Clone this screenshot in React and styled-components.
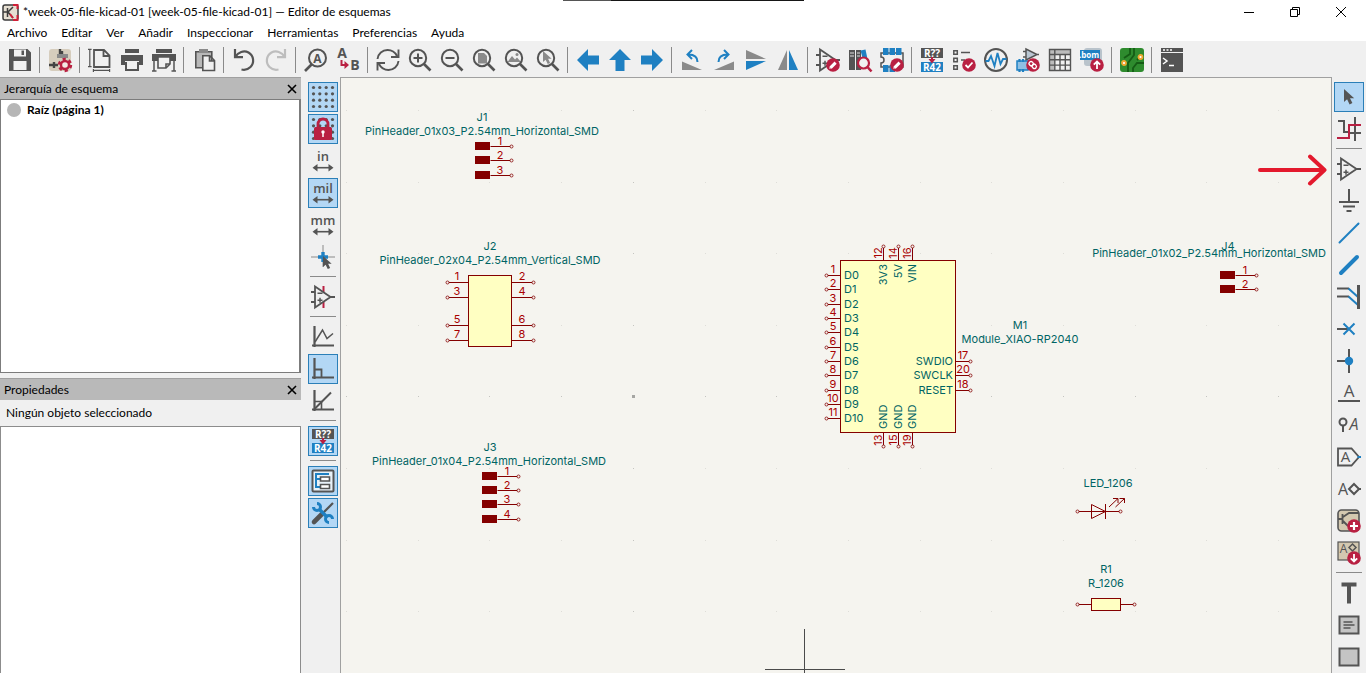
import React from 'react';
import styled, { createGlobalStyle } from 'styled-components';

const INK = '#545454';
const RED = '#b92042';
const BLUE = '#1f80c2';
const GREY = '#8a8a8a';
const UI_FONT = 'Lato, "Open Sans", sans-serif';

const GlobalStyle = createGlobalStyle`
  * { box-sizing: border-box; }
  body { margin: 0; background: #f0f0f0; font: 12px/16px ${UI_FONT}; color: #000; overflow: hidden; }
  button { font: inherit; color: inherit; border: 0; padding: 0; background: none; }
  svg { display: block; overflow: visible; }
`;

const Window = styled.div`
  display: flex;
  flex-direction: column;
  min-height: 100vh;
`;
const TitleBar = styled.header`
  display: flex;
  align-items: center;
  gap: 4px;
  height: 24px;
  padding: 0 2px;
  background: #fff;
`;
const Title = styled.h1`
  flex: 1;
  margin: 0;
  font-size: 12px;
  font-weight: 400;
`;
const WindowButtons = styled.div`
  display: flex;
`;
const WindowButton = styled.button`
  display: grid;
  place-items: center;
  width: 46px;
  height: 20px;
`;
const BackgroundEdge = styled.div`
  position: absolute;
  top: 0;
  left: 563px;
  width: 241px;
  height: 1px;
  background: linear-gradient(90deg, #555 20%, #161616 20%);
`;
const MenuBar = styled.nav`
  display: flex;
  gap: 14px;
  height: 17px;
  padding: 0 7px;
  background: #fff;
`;
const MenuButton = styled.button`
  line-height: 17px;
`;
const TopToolbar = styled.div`
  display: flex;
  align-items: center;
  height: 36px;
  padding: 2px 4px 0;
  background: #f0f0f0;
`;
const SideToolbar = styled.div`
  display: flex;
  flex-direction: column;
  align-items: center;
  flex: 0 0 ${(p) => p.$width}px;
  padding: 4px 0 0 ${(p) => p.$inset || 0}px;
  background: #f0f0f0;
`;
const ToolButton = styled.button`
  display: grid;
  place-items: center;
  flex: none;
  width: 30px;
  height: 30px;
  margin: 1px;
  border: 1px solid ${(p) => (p.$active ? '#2b7fb8' : 'transparent')};
  background: ${(p) => (p.$active ? '#b3d7f5' : 'transparent')};
`;
const Separator = styled.div`
  flex: none;
  background: ${GREY};
  ${(p) => (p.$side ? 'width: 26px; height: 1px; margin: 3px 0 4px;' : 'width: 1px; height: 26px; margin: 0 4px 0 3px;')}
`;
const Body = styled.main`
  display: flex;
  flex: 1;
`;
const Docks = styled.aside`
  display: flex;
  flex-direction: column;
  flex: 0 0 301px;
  gap: 5px;
`;
const Dock = styled.section`
  display: flex;
  flex-direction: column;
  flex: ${(p) => (p.$grow ? '1' : '0 0 296px')};
  border-top: 1px solid #a0a0a0;
`;
const DockHeader = styled.div`
  display: flex;
  align-items: center;
  justify-content: space-between;
  height: 21px;
  padding: 0 4px;
  background: #b9b9b9;
`;
const DockTitle = styled.h2`
  margin: 0;
  font-size: 12px;
  font-weight: 400;
`;
const DockClose = styled.button`
  display: grid;
  place-items: center;
  width: 10px;
  height: 10px;
`;
const Sheets = styled.ul`
  flex: 1;
  margin: 0;
  padding: 2px 6px;
  list-style: none;
  background: #fff;
  border: 1px solid #7c7c7c;
  border-right-width: 2px;
`;
const Sheet = styled.li`
  display: flex;
  align-items: center;
  gap: 6px;
  font-weight: 700;
  &::before {
    content: '';
    width: 14px;
    height: 14px;
    border-radius: 50%;
    background: #b6b6b6;
  }
`;
const Selection = styled.p`
  margin: 0;
  padding: 5px 6px;
`;
const PropertyGrid = styled.div`
  flex: 1;
  background: #fff;
  border: 1px solid #8c8c8c;
  border-bottom: 0;
`;
const Canvas = styled.div`
  position: relative;
  flex: 1;
  min-width: 0;
  overflow: hidden;
  background: #f5f4ef;
  border: 1px solid #a0a0a0;
  border-bottom: 0;
`;
const Drawing = styled.svg`
  position: absolute;
  inset: 0;
  width: 100%;
  height: 100%;
  font: 11px Inter, sans-serif;
  font-feature-settings: 'calt' 0;
`;

/* ---------- icons ---------- */

const Icon = ({ children }) => (
  <svg width="24" height="24" viewBox="0 0 24 24" fill="none" stroke={INK} strokeWidth="2" aria-hidden="true">
    {children}
  </svg>
);
const Glyph = ({ x, y, size = 10, fill = INK, weight = 700, family = 'Open Sans', italic, children }) => (
  <text x={x} y={y} fontSize={size} fill={fill} stroke="none" fontWeight={weight} fontFamily={`"${family}", sans-serif`} fontStyle={italic ? 'italic' : 'normal'} textAnchor="middle">
    {children}
  </text>
);
const Badge = ({ x = 17, y = 17, children }) => (
  <g>
    <circle cx={x} cy={y} r="6.8" fill={RED} stroke="none" />
    <g stroke="#fff" strokeWidth="1.8">{children}</g>
  </g>
);
const Pencil = () => (
  <Badge>
    <path d="M14.6 19.6l5-5" strokeWidth="3" />
    <path d="M13.2 20.8l.6-2.4 1.8 1.8z" fill="#fff" stroke="none" />
  </Badge>
);
const Lens = ({ children }) => (
  <>
    {children}
    <circle cx="10" cy="10" r="8.2" />
    <path d="M16 16l6.5 6.5" strokeWidth="2.6" />
  </>
);
const OpAmp = () => (
  <g strokeWidth="1.8">
    <path d="M4 1.5v21L19.5 12zM0 7h4M0 17h4M19 12h5" />
    <path d="M6.500 8.300h5M6.500 15.200h5M9 12.700v5" strokeWidth="1.500" />
  </g>
);
const Annotate = () => (
  <>
    <rect x="1" y="0" width="22" height="10" fill={INK} stroke="none" />
    <rect x="1" y="14" width="22" height="10" fill={BLUE} stroke="none" />
    <Glyph x="12" y="9" size="10" fill="#fff">R??</Glyph>
    <Glyph x="12" y="23" size="10" fill="#fff">R42</Glyph>
    <path d="M12 9v3" stroke={RED} />
    <path d="M8.500 11h7L12 15.500z" fill={RED} stroke="none" />
  </>
);
const Dots = () => (
  <g fill={INK} stroke="none">
    {[2.5, 8.8, 15.2, 21.5].flatMap((y) => [2.5, 8.8, 15.2, 21.5].map((x) => <circle key={`${x}-${y}`} cx={x} cy={y} r="1.6" />))}
  </g>
);
const Units = ({ children }) => (
  <>
    <Glyph x="12" y="12" size="13" weight="600">{children}</Glyph>
    <path d="M3 18.700h18" strokeWidth="1.600" />
    <path d="M6.500 15v7.400L1.500 18.700zM17.500 15v7.400l5-3.700z" fill={INK} stroke="none" />
  </>
);
const Pointer = ({ fill = INK, ...rest }) => (
  <path d="M0 0v13l3.100-2.800 2.500 5.200 2.800-1.400L6 9.200h4.200z" fill={fill} stroke="none" {...rest} />
);
const BLOCK_ARROW = 'M1 12L12 1v6.500h11v9H12V23z';
const Axes = () => <path d="M3.500 1v21M1 20.500h22" strokeWidth="2.200" />;

const icons = {
  save: <path d="M1 1h18.500L23 4.500V23H1zM6 1.500v7h12v-7zM5.500 13v9h13v-9zM13.500 2.500h2.500v4.500h-2.500z" fill={INK} fillRule="evenodd" stroke="none" />,
  settings: (
    <>
      <rect x="1" y="1" width="22" height="22" rx="3" fill="#d6cdbd" stroke="none" />
      <path d="M12 1v7M1 17h9M6 14v6M14 3v5" strokeWidth="2.400" stroke="#444" />
      <path d="M9 8h11" stroke={GREY} strokeWidth="4" />
      <circle cx="17" cy="17" r="5.400" stroke={RED} strokeWidth="3.600" strokeDasharray="2.900 2.750" />
      <circle cx="17" cy="17" r="4" stroke={RED} strokeWidth="2.400" fill="#f3e9e4" />
    </>
  ),
  page: (
    <>
      <path d="M6 2h10l5.500 5.500V19H6zM15.500 2v6h6" strokeWidth="1.800" />
      <path d="M1.800 1v18M0 1.400h3.600M0 18.600h3.600M5 22.400h17M5.400 21v3M21.600 21v3" strokeWidth="1.200" />
    </>
  ),
  print: (
    <>
      <path d="M5 1h14v4H5zM1 7h22v10h-4v-4H5v4H1z" fill={INK} stroke="none" />
      <path d="M6 14v8h12v-8" />
    </>
  ),
  plot: (
    <>
      <path d="M4 1h16v4H4zM0 6h24v7H0z" fill={INK} stroke="none" />
      <path d="M2 12v11M22 12v11M0 23h4.500M19.500 23H24" strokeWidth="1.500" />
      <path d="M6 9h12v7l-4 4H6z" fill="#f0f0f0" strokeWidth="1.600" />
      <path d="M14 20v-4h4" strokeWidth="1.600" />
    </>
  ),
  paste: (
    <>
      <path d="M3.800 3.800h16v16h-16z" fill="#b8b8b8" strokeWidth="1.600" />
      <path d="M7 1h9v4H7z" fill={GREY} stroke="none" />
      <path d="M10.800 7.800h7l4.700 4.700v10H10.800zM17.500 8v5h5" fill="#f0f0f0" strokeWidth="1.600" />
    </>
  ),
  undo: <path d="M3 1v8.200h8M3.200 9C6 4 12 2 16.500 4.500c5.500 3.200 6 10.500 2 14.500-2.700 2.700-6 3.200-9 2.500" strokeWidth="2.200" />,
  redo: <path d="M21 1v8.200h-8M20.800 9C18 4 12 2 7.500 4.500c-5.500 3.200-6 10.500-2 14.500 2.700 2.700 6 3.200 9 2.500" strokeWidth="2.200" stroke="#bdbdbd" />,
  find: (
    <>
      <circle cx="13.500" cy="10" r="8.500" />
      <path d="M7.500 16.500L1 23" strokeWidth="2.600" />
      <Glyph x="13.500" y="14.500" size="12">A</Glyph>
    </>
  ),
  replace: (
    <>
      <Glyph x="6" y="10" size="14">A</Glyph>
      <Glyph x="19" y="22" size="14">B</Glyph>
      <path d="M5.500 12v5H10" stroke={RED} />
      <path d="M8.500 13l4.500 4-4.500 4z" fill={RED} stroke="none" />
    </>
  ),
  refresh: <path d="M1.500 11C2 5.500 6.500 2 11.500 2c4 0 7.500 2 9.500 6M22.500 1.500V9H15M22.500 13c-.5 5.500-5 9-10 9-4 0-7.500-2-9.500-6M1.500 22.500V15H9" strokeWidth="1.900" />,
  zoomIn: <Lens><path d="M5.500 10h9M10 5.500v9" /></Lens>,
  zoomOut: <Lens><path d="M5.500 10h9" /></Lens>,
  zoomPage: <Lens><path d="M6 5h6l3 3v7.500H6z" fill={GREY} stroke="none" /></Lens>,
  zoomObjects: <Lens><path d="M3.500 14l4.500-6 3 3.500 2-2 4 4.500z" fill={GREY} stroke="none" /><circle cx="13" cy="6.500" r="1.500" fill={GREY} stroke="none" /></Lens>,
  zoomSelection: <Lens><Pointer fill={GREY} transform="translate(7 3) scale(.85)" /></Lens>,
  left: <path d={BLOCK_ARROW} fill={BLUE} stroke="none" />,
  up: <path d={BLOCK_ARROW} fill={BLUE} stroke="none" transform="rotate(90 12 12)" />,
  right: <path d={BLOCK_ARROW} fill={BLUE} stroke="none" transform="rotate(180 12 12)" />,
  rotateLeft: (
    <>
      <path d="M2 13.500V22h20z" fill={GREY} stroke="none" />
      <path d="M17.500 14c0-5-3-7.500-9-7.500M12 2L7.500 6.500 12 11" stroke={BLUE} />
    </>
  ),
  rotateRight: (
    <>
      <path d="M22 13.500V22H2z" fill={GREY} stroke="none" />
      <path d="M6.500 14c0-5 3-7.500 9-7.500M12 2l4.500 4.500L12 11" stroke={BLUE} />
    </>
  ),
  mirrorV: (
    <>
      <path d="M2 2v9h20z" fill={GREY} stroke="none" />
      <path d="M2 22v-9h20z" fill={BLUE} stroke="none" />
    </>
  ),
  mirrorH: (
    <>
      <path d="M2 22h9V2z" fill={GREY} stroke="none" />
      <path d="M22 22h-9V2z" fill={BLUE} stroke="none" />
    </>
  ),
  symbolEditor: <><OpAmp /><Pencil /></>,
  library: (
    <>
      <path d="M1 2h6v20H1zM8 2h5v20H8z" fill={INK} stroke="none" />
      <path d="M2 5h4M2 8h4M9 5h3M9 8h3" stroke="#ddd" strokeWidth="1.200" />
      <path d="M12.500 2.500l5-1L21 18l-4 1z" fill={BLUE} stroke="none" />
      <circle cx="15.500" cy="15" r="5.500" fill="#f0f0f0" stroke={RED} strokeWidth="2.200" />
      <path d="M19.500 19l4 4.500" stroke={RED} strokeWidth="2.600" />
    </>
  ),
  footprintEditor: (
    <>
      <path d="M1 5h22v14H1v-4a3 3 0 000-6z" strokeWidth="1.500" />
      <path d="M3 0h5.500v7H3zM9.500 0H15v7H9.500zM16 0h5.500v7H16zM3 17h5.500v7H3zM9.500 17H15v7H9.500z" fill={BLUE} stroke="none" />
      <Pencil />
    </>
  ),
  annotate: <Annotate />,
  checks: (
    <>
      <path d="M1.800 2.800h3.500v3.500H1.800zM1.800 10.200h3.500v3.500H1.800zM1.800 17.800h3.500v3.500H1.800zM9 4.500h9M9 12h4" strokeWidth="1.500" />
      <Badge><path d="M13.500 17l2.500 2.500 4.500-5" /></Badge>
    </>
  ),
  simulator: (
    <>
      <circle cx="12" cy="12" r="11" />
      <path d="M1.500 13h3l2.500-5 3.500 10 3-13 3 11 2.500-5h3.500" stroke={BLUE} strokeWidth="1.800" />
    </>
  ),
  assign: (
    <>
      <path d="M10 1v11l11-5.500zM7 3.500h3M7 9h3M20 6.500h3" fill="#b9c6d2" strokeWidth="1.500" />
      <path d="M1 13h11v9H1z" fill="#8fc0e4" stroke={BLUE} strokeWidth="1.500" />
      <path d="M3.500 11v3M7 11v3M3.500 21v3M7 21v3" stroke={BLUE} strokeWidth="2.200" />
      <Badge>
        <rect x="13" y="13.700" width="4.500" height="4" rx="2" transform="rotate(45 15.200 15.700)" strokeWidth="1.300" />
        <rect x="16" y="16.300" width="4.500" height="4" rx="2" transform="rotate(45 18.200 18.300)" strokeWidth="1.300" />
      </Badge>
    </>
  ),
  table: (
    <>
      <path d="M2 2h20v4H2zM2 6h4v16H2z" fill="#bcbcbc" stroke="none" />
      <path d="M1.500 1.500h21v21h-21zM1.500 6.500h21M1.500 11.800h21M1.500 17.100h21M6.800 1.500v21M12 6.500v16M17.300 6.500v16" strokeWidth="1.400" />
    </>
  ),
  bom: (
    <>
      <rect x="4" y="0" width="18" height="18" rx="3" fill="#b9c3cb" stroke="none" />
      <rect x="0" y="2" width="20" height="10" fill={BLUE} stroke="none" />
      <Glyph x="9" y="10" size="8" fill="#fff">.bom</Glyph>
      <Badge><path d="M17 21v-7M13.800 16.700l3.200-3.200 3.200 3.200" /></Badge>
    </>
  ),
  pcb: (
    <>
      <rect x="0" y="0" width="24" height="24" rx="3" fill="#2e8b2e" stroke="none" />
      <path d="M10 0v6L4 10M14 0v7l-6 8v9M24 15h-7l-4 5v4M20 9l-3 3" stroke="#155c15" strokeWidth="1.800" />
      <circle cx="4" cy="15" r="2" fill="#fff" stroke="#f0a830" strokeWidth="1.800" />
      <circle cx="20.500" cy="9" r="2" fill="#fff" stroke="#f0a830" strokeWidth="1.800" />
    </>
  ),
  console: (
    <>
      <path d="M1 0h22v4H1zM1 5h22v19H1z" fill={INK} stroke="none" />
      <path d="M3 2h2M6.500 2h2M10 2h2" stroke="#fff" strokeWidth="1.600" />
      <path d="M3 10l4 3-4 3M9 17.500h5" stroke="#fff" strokeWidth="1.500" />
    </>
  ),
  grid: <Dots />,
  gridLock: (
    <>
      <Dots />
      <rect x="3" y="10" width="18" height="13" rx="1.500" fill={RED} stroke="none" />
      <path d="M7 11V7a5 5 0 0110 0v4" stroke={RED} strokeWidth="2.800" />
      <circle cx="12" cy="15" r="1.700" fill="#fff" stroke="none" />
      <path d="M12 15v5" stroke="#fff" strokeWidth="1.500" />
    </>
  ),
  inches: <Units>in</Units>,
  mils: <Units>mil</Units>,
  millimetres: <Units>mm</Units>,
  cursor: (
    <>
      <path d="M12 0v22M0 12h24" stroke={GREY} strokeWidth="1" />
      <path d="M12 7v10M7 12h10" stroke={BLUE} strokeWidth="3.400" />
      <Pointer transform="translate(12 11) scale(.85)" />
    </>
  ),
  hiddenPins: <><path d="M12.500 1v6M12.500 17v6" stroke={RED} /><OpAmp /></>,
  freeAngle: <><Axes /><path d="M4 17l7.500-12 4.500 8.500 6-5" strokeWidth="1.500" /></>,
  rightAngle: <><Axes /><path d="M4 12.500h6.500V20" strokeWidth="1.800" /></>,
  angle45: <><Axes /><path d="M3.500 20L20 3.500" /><path d="M4 12.500h6.500V20" strokeWidth="1.600" /></>,
  hierarchy: (
    <>
      <rect x="1.500" y="1.500" width="21" height="21" rx="1" fill="#e8f1f8" />
      <path d="M4 5h14" stroke={BLUE} strokeWidth="2" />
      <path d="M5 5v13h4M5 10h4" stroke={BLUE} />
      <path d="M9.500 8h9v4h-9zM9.500 15.500h9v4h-9z" strokeWidth="1.600" fill="#fff" />
    </>
  ),
  properties: (
    <>
      <path d="M22 2L11 13" strokeWidth="2.200" />
      <path d="M11 13L3 21" strokeWidth="4.600" strokeLinecap="round" />
      <path d="M8 8l8.500 8.500" stroke={BLUE} strokeWidth="3.400" />
      <path d="M6 2.500A3.500 3.500 0 112.500 6" stroke={BLUE} strokeWidth="3" />
      <path d="M21.500 18a3.500 3.500 0 10-3.500 3.500" stroke={BLUE} strokeWidth="3" />
    </>
  ),
  select: <Pointer transform="translate(7 4)" />,
  highlight: (
    <>
      <path d="M1 4h6v11h5M18 0v24M12 16h12M16 8h8" />
      <path d="M0 21h12V8h12" stroke={RED} />
    </>
  ),
  symbol: <OpAmp />,
  power: <path d="M12 0v12M2 13h20M6 17.500h12M9.500 22h5" />,
  wire: <path d="M2.500 21.500l19-19" stroke={BLUE} strokeLinecap="round" />,
  bus: <path d="M4 20L20 4" stroke={BLUE} strokeWidth="4" strokeLinecap="round" />,
  busEntry: (
    <>
      <path d="M0 3.500h12M0 11.500h12" />
      <path d="M11.500 3.500l10 9M11.500 11.500l10 9" stroke={BLUE} />
      <path d="M21.500 0v24" strokeWidth="3" />
    </>
  ),
  noConnect: <><path d="M0 12h11" /><path d="M6.500 6.500l11 11M17.500 6.500l-11 11" stroke={BLUE} /></>,
  junction: <><path d="M0 12h12M12 0v24" /><circle cx="12" cy="12" r="4.200" fill={BLUE} stroke="none" /></>,
  label: <><Glyph x="12" y="16" size="17" weight="400">A</Glyph><path d="M1 20h22" /></>,
  netClass: <><circle cx="6" cy="9" r="3.500" /><path d="M6 12.500V19" /><Glyph x="17" y="17" size="16" weight="400" italic>A</Glyph></>,
  globalLabel: <><path d="M1 3.500h13.500L22 12l-7.500 8.500H1z" strokeWidth="1.800" /><path d="M20.500 12H24" stroke={BLUE} /><Glyph x="8.500" y="17" size="15" weight="400">A</Glyph></>,
  sheetLabel: <><Glyph x="6" y="18" size="16" weight="400">A</Glyph><path d="M17 7l5 5-5 5-5-5zM22 12h2" /></>,
  sheet: (
    <>
      <rect x="1" y="1" width="21" height="21" rx="3.500" fill="#d3c8b0" strokeWidth="1.600" />
      <path d="M1 10h4M5.500 5v10M6 8l6-4h10M6 12l5 5" strokeWidth="1.800" />
      <Badge><path d="M17 13v8M13 17h8" strokeWidth="2.200" /></Badge>
    </>
  ),
  importPin: (
    <>
      <rect x="1" y="1" width="21" height="18" fill="#d3c8b0" strokeWidth="1.200" />
      <Glyph x="6.500" y="12" size="12" weight="400">A</Glyph>
      <path d="M15.500 3l3.500 3.500-3.500 3.500L12 6.500z" strokeWidth="1.500" />
      <Badge><path d="M17 13v7M13.800 17.300l3.200 3.200 3.200-3.200" /></Badge>
    </>
  ),
  text: <path d="M4.500 3.500h15M12 2.500v20" strokeWidth="4" />,
  textBox: <><rect x="2.500" y="3.500" width="19" height="17" fill="#c4c4c4" /><path d="M6.500 9h9M6.500 12h11M6.500 15h7" strokeWidth="1.300" /></>,
  rectangle: <rect x="2.500" y="3.500" width="19" height="17" fill="#c4c4c4" />,
};

const topTools = [
  ['save', 'Guardar'], null,
  ['settings', 'Configuración del esquema'], null,
  ['page', 'Ajustes de página'], ['print', 'Imprimir'], ['plot', 'Trazar'], null,
  ['paste', 'Pegar'], null,
  ['undo', 'Deshacer'], ['redo', 'Rehacer'], null,
  ['find', 'Buscar'], ['replace', 'Buscar y reemplazar'], null,
  ['refresh', 'Actualizar'], ['zoomIn', 'Acercar'], ['zoomOut', 'Alejar'], ['zoomPage', 'Ajustar a la página'],
  ['zoomObjects', 'Ajustar a los objetos'], ['zoomSelection', 'Ajustar a la selección'], null,
  ['left', 'Atrás'], ['up', 'Subir'], ['right', 'Adelante'], null,
  ['rotateLeft', 'Rotar a la izquierda'], ['rotateRight', 'Rotar a la derecha'], ['mirrorV', 'Reflejar verticalmente'], ['mirrorH', 'Reflejar horizontalmente'], null,
  ['symbolEditor', 'Editor de símbolos'], ['library', 'Explorar bibliotecas'], ['footprintEditor', 'Editor de huellas'], null,
  ['annotate', 'Anotar'], ['checks', 'Comprobar reglas'], ['simulator', 'Simulador'], ['assign', 'Asignar huellas'], ['table', 'Tabla de campos'], ['bom', 'Generar lista de materiales'], null,
  ['pcb', 'Editor de placas'], null,
  ['console', 'Consola'],
];
const leftTools = [
  ['grid', 'Cuadrícula', true], ['gridLock', 'Ajuste a la cuadrícula', true], ['inches', 'Pulgadas'], ['mils', 'Milésimas', true],
  ['millimetres', 'Milímetros'], ['cursor', 'Cursor completo'], null,
  ['hiddenPins', 'Pines ocultos'], null,
  ['freeAngle', 'Ángulo libre'], ['rightAngle', 'Ángulo recto', true], ['angle45', 'Ángulo de 45 grados'], null,
  ['annotate', 'Anotación automática', true], null,
  ['hierarchy', 'Jerarquía', true], ['properties', 'Propiedades', true],
];
const rightTools = [
  ['select', 'Seleccionar', true], ['highlight', 'Resaltar red'], null,
  ['symbol', 'Añadir símbolo'], ['power', 'Añadir alimentación'], ['wire', 'Hilo'], ['bus', 'Bus'], ['busEntry', 'Entrada de bus'],
  ['noConnect', 'No conectado'], ['junction', 'Unión'], ['label', 'Etiqueta'], ['netClass', 'Clase de red'], ['globalLabel', 'Etiqueta global'],
  ['sheetLabel', 'Etiqueta jerárquica'], ['sheet', 'Añadir hoja'], ['importPin', 'Importar pin'], null,
  ['text', 'Texto'], ['textBox', 'Cuadro de texto'], ['rectangle', 'Rectángulo'],
];

const Tools = ({ items, side }) =>
  items.map((item, i) =>
    item ? (
      <ToolButton key={item[0]} $active={item[2]} aria-label={item[1]}>
        <Icon>{icons[item[0]]}</Icon>
      </ToolButton>
    ) : (
      <Separator key={`sep-${i}`} $side={side} />
    )
  );

/* ---------- schematic ---------- */

const WIRE = '#840000';
const PIN_TEXT = '#a90000';
const FIELD = '#006464';
const BODY_FILL = '#ffffc2';

const Field = ({ x, y, children, anchor = 'middle', fill = FIELD, rotate }) => (
  <text x={x} y={y} fill={fill} textAnchor={anchor} transform={rotate ? `rotate(-90 ${x} ${y})` : undefined}>
    {children}
  </text>
);
const Pin = ({ from, to }) => (
  <g stroke={WIRE} fill="none">
    <path d={`M${from[0] + 0.5} ${from[1] + 0.5}L${to[0] + 0.5} ${to[1] + 0.5}`} />
    <circle cx={to[0] + 0.5} cy={to[1] + 0.5} r="1.5" strokeWidth="0.8" fill="#f5f4ef" />
  </g>
);
const Block = ({ x, y, w, h }) => <rect x={x + 0.5} y={y + 0.5} width={w} height={h} fill={BODY_FILL} stroke={WIRE} />;

const Header = ({ x, rows, name, nameAt, value, valueAt }) => (
  <g>
    <Field x={nameAt[0]} y={nameAt[1]}>{name}</Field>
    <Field x={valueAt[0]} y={valueAt[1]}>{value}</Field>
    {rows.map((y, i) => (
      <g key={y}>
        <rect x={x} y={y - 4} width="15" height="8" fill={WIRE} />
        <Pin from={[x + 15, y]} to={[x + 36, y]} />
        <Field x={x + 25} y={y - 1} fill={PIN_TEXT}>{i + 1}</Field>
      </g>
    ))}
  </g>
);

const gridXs = Array.from({ length: 14 }, (_, i) => 346 + Math.round(i * 71.7));
const gridYs = Array.from({ length: 8 }, (_, i) => 110 + Math.round(i * 71.6));
const xiaoRows = [275, 289, 304, 318, 332, 347, 361, 375, 390, 404, 418];

const Schematic = () => (
  <Drawing role="img" aria-label="Esquema">
    <g transform="translate(-341 -78)">
      {gridYs.map((y) => gridXs.map((x) => <rect key={`${x}-${y}`} x={x} y={y} width="1" height="1" fill={y === 396 || x === 633 ? '#c4c4c0' : '#deddd8'} />))}
      <rect x="632" y="395" width="3" height="3" fill="#a6a6a3" />

      <Header x={475} rows={[146, 160, 175]} name="J1" nameAt={[482, 121]} value="PinHeader_01x03_P2.54mm_Horizontal_SMD" valueAt={[482, 135]} />
      <Header x={482} rows={[476, 490, 504, 519]} name="J3" nameAt={[490, 451]} value="PinHeader_01x04_P2.54mm_Horizontal_SMD" valueAt={[489, 465]} />
      <Header x={1220} rows={[275, 289]} name="J4" nameAt={[1228, 250]} value="PinHeader_01x02_P2.54mm_Horizontal_SMD" valueAt={[1209, 257]} />

      <Field x={490} y={250}>J2</Field>
      <Field x={490} y={264}>PinHeader_02x04_P2.54mm_Vertical_SMD</Field>
      <Block x={468} y={275} w={43} h={71} />
      {[282, 297, 325, 340].map((y, i) => (
        <g key={y}>
          <Pin from={[468, y]} to={[447, y]} />
          <Field x={457} y={y - 2} fill={PIN_TEXT}>{i * 2 + 1}</Field>
          <Pin from={[511, y]} to={[533, y]} />
          <Field x={522} y={y - 2} fill={PIN_TEXT}>{i * 2 + 2}</Field>
        </g>
      ))}

      <Block x={840} y={260} w={115} h={172} />
      {xiaoRows.map((y, i) => (
        <g key={y}>
          <Pin from={[840, y]} to={[826, y]} />
          <Field x={833} y={y - 2} fill={PIN_TEXT}>{i + 1}</Field>
          <Field x={844} y={y + 4} anchor="start">{`D${i}`}</Field>
        </g>
      ))}
      {[[361, '17', 'SWDIO'], [375, '20', 'SWCLK'], [390, '18', 'RESET']].map(([y, number, label]) => (
        <g key={y}>
          <Pin from={[955, y]} to={[970, y]} />
          <Field x={963} y={y - 2} fill={PIN_TEXT}>{number}</Field>
          <Field x={953} y={y + 4} anchor="end">{label}</Field>
        </g>
      ))}
      {[[883, '12', '3V3', '13'], [898, '14', '5V', '15'], [912, '16', 'VIN', '19']].map(([x, top, label, bottom]) => (
        <g key={x}>
          <Pin from={[x, 260]} to={[x, 246]} />
          <Field x={x - 1} y={253} fill={PIN_TEXT} rotate>{top}</Field>
          <Field x={x + 4} y={264} anchor="end" rotate>{label}</Field>
          <Pin from={[x, 432]} to={[x, 446]} />
          <Field x={x - 1} y={440} fill={PIN_TEXT} rotate>{bottom}</Field>
          <Field x={x + 4} y={429} anchor="start" rotate>GND</Field>
        </g>
      ))}
      <Field x={1020} y={329}>M1</Field>
      <Field x={1020} y={343}>Module_XIAO-RP2040</Field>

      <Field x={1108} y={487}>LED_1206</Field>
      <Pin from={[1105, 511]} to={[1077, 511]} />
      <Pin from={[1091, 511]} to={[1120, 511]} />
      <g stroke={WIRE} fill="none">
        <path d="M1091.500 504.500v14l14-7zM1105.500 504v15" />
        <path d="M1109 507l9-8.500M1113 498.500h5v4.500M1115.500 507l9-8.500M1119.500 498.500h5v4.500" />
      </g>

      <Field x={1106} y={573}>R1</Field>
      <Field x={1106} y={587}>R_1206</Field>
      <Pin from={[1091, 604]} to={[1077, 604]} />
      <Pin from={[1120, 604]} to={[1134, 604]} />
      <Block x={1091} y={598} w={29} h={12} />

      <path d="M804.500 629v90M765 669.500h80" stroke="#4a4a4a" fill="none" />
      <path d="M1260 170h64M1310 156.500l14.500 13.500-14.500 13.500" stroke="#e3192d" strokeWidth="4" strokeLinecap="round" strokeLinejoin="round" fill="none" />
    </g>
  </Drawing>
);

const CloseMark = ({ size = 10, weight = 1 }) => (
  <svg width={size} height={size} viewBox="0 0 10 10" stroke="#000" strokeWidth={weight} aria-hidden="true">
    <path d="M0 0l10 10M10 0L0 10" />
  </svg>
);

const menus = ['Archivo', 'Editar', 'Ver', 'Añadir', 'Inspeccionar', 'Herramientas', 'Preferencias', 'Ayuda'];

export default function App() {
  return (
    <Window>
      <GlobalStyle />
      <BackgroundEdge />
      <TitleBar>
        <svg width="17" height="17" viewBox="0 0 17 17" fill="none" aria-hidden="true">
          <rect x="1" y="1" width="15" height="15" rx="2" fill="#e6dfd2" stroke="#3c3c3c" strokeWidth="1.500" />
          <path d="M1 8h4M5.500 4v9M6 8l5-5M6 8l5 6" stroke="#3c3c3c" strokeWidth="1.500" />
          <path d="M11 1h4.500v4M15.500 11v5H11M8 10l3 4" stroke="#d02038" strokeWidth="2" />
        </svg>
        <Title>*week-05-file-kicad-01 [week-05-file-kicad-01] — Editor de esquemas</Title>
        <WindowButtons>
          <WindowButton aria-label="Minimizar">
            <svg width="10" height="10" viewBox="0 0 10 10" stroke="#000"><path d="M0 5.500h10" /></svg>
          </WindowButton>
          <WindowButton aria-label="Restaurar">
            <svg width="10" height="10" viewBox="0 0 10 10" stroke="#000" fill="none"><path d="M.5 2.500h7v7h-7zM2.500 2.500v-2h7v7h-2" /></svg>
          </WindowButton>
          <WindowButton aria-label="Cerrar"><CloseMark /></WindowButton>
        </WindowButtons>
      </TitleBar>
      <MenuBar>
        {menus.map((name) => <MenuButton key={name}>{name}</MenuButton>)}
      </MenuBar>
      <TopToolbar role="toolbar"><Tools items={topTools} /></TopToolbar>
      <Body>
        <Docks>
          <Dock>
            <DockHeader>
              <DockTitle>Jerarquía de esquema</DockTitle>
              <DockClose aria-label="Cerrar jerarquía"><CloseMark size={8} weight={2} /></DockClose>
            </DockHeader>
            <Sheets><Sheet>Raíz (página 1)</Sheet></Sheets>
          </Dock>
          <Dock $grow>
            <DockHeader>
              <DockTitle>Propiedades</DockTitle>
              <DockClose aria-label="Cerrar propiedades"><CloseMark size={8} weight={2} /></DockClose>
            </DockHeader>
            <Selection>Ningún objeto seleccionado</Selection>
            <PropertyGrid />
          </Dock>
        </Docks>
        <SideToolbar role="toolbar" $width={39} $inset={4}><Tools items={leftTools} side /></SideToolbar>
        <Canvas><Schematic /></Canvas>
        <SideToolbar role="toolbar" $width={34}><Tools items={rightTools} side /></SideToolbar>
      </Body>
    </Window>
  );
}
